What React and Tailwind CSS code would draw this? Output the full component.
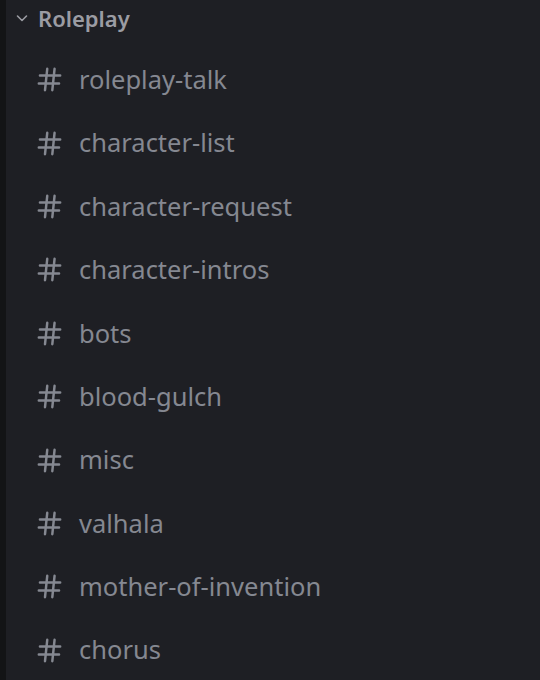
import React from "react";

const channels = [
  "roleplay-talk",
  "character-list",
  "character-request",
  "character-intros",
  "bots",
  "blood-gulch",
  "misc",
  "valhala",
  "mother-of-invention",
  "chorus",
];

const Hash = () => (
  <svg width="27" height="27" viewBox="0 0 24 24" fill="none" stroke="currentColor" strokeWidth="2.2" strokeLinecap="round">
    <path d="M3.5 8.5h18M2.5 15.5h18M10 2.5 8 21.5M16.5 2.5l-2 19" />
  </svg>
);

export default function App() {
  return (
    <div className="flex h-[680px] w-[540px] bg-[#1e1f24]" style={{ fontFamily: "'Noto Sans', 'Open Sans', sans-serif" }}>
      <div className="w-[6px] bg-[#131416]" />
      <div className="flex-1">
        <div className="flex h-[36px] items-center pl-[9px] text-[#9b9ca3]">
          <svg width="14" height="14" viewBox="0 0 14 14" fill="none" stroke="currentColor" strokeWidth="1.6" strokeLinecap="round" strokeLinejoin="round">
            <path d="M2.5 5 7 9.5 11.5 5" />
          </svg>
          <span className="ml-[9px] text-[22px] font-semibold leading-none">Roleplay</span>
        </div>
        <div className="flex flex-col pt-[12px]">
          {channels.map((c) => (
            <div key={c} className="flex h-[63.4px] items-center pl-[30px] text-[#858891]">
              <Hash />
              <span className="ml-[16px] text-[25.5px] leading-none">{c}</span>
            </div>
          ))}
        </div>
      </div>
    </div>
  );
}
